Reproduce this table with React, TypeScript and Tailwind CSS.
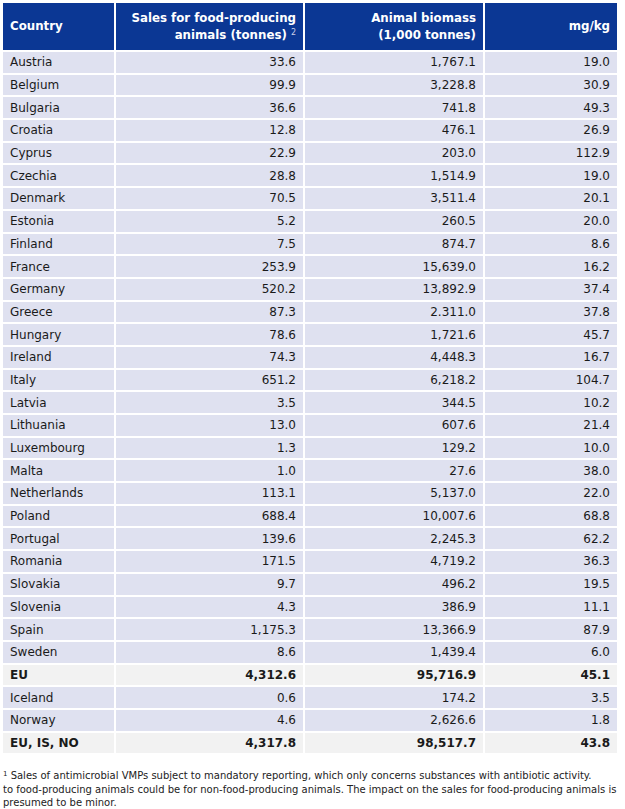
import React from "react";

type Row = { country: string; sales: string; biomass: string; mgkg: string; total?: boolean };

const rows: Row[] = [
  { country: "Austria", sales: "33.6", biomass: "1,767.1", mgkg: "19.0" },
  { country: "Belgium", sales: "99.9", biomass: "3,228.8", mgkg: "30.9" },
  { country: "Bulgaria", sales: "36.6", biomass: "741.8", mgkg: "49.3" },
  { country: "Croatia", sales: "12.8", biomass: "476.1", mgkg: "26.9" },
  { country: "Cyprus", sales: "22.9", biomass: "203.0", mgkg: "112.9" },
  { country: "Czechia", sales: "28.8", biomass: "1,514.9", mgkg: "19.0" },
  { country: "Denmark", sales: "70.5", biomass: "3,511.4", mgkg: "20.1" },
  { country: "Estonia", sales: "5.2", biomass: "260.5", mgkg: "20.0" },
  { country: "Finland", sales: "7.5", biomass: "874.7", mgkg: "8.6" },
  { country: "France", sales: "253.9", biomass: "15,639.0", mgkg: "16.2" },
  { country: "Germany", sales: "520.2", biomass: "13,892.9", mgkg: "37.4" },
  { country: "Greece", sales: "87.3", biomass: "2.311.0", mgkg: "37.8" },
  { country: "Hungary", sales: "78.6", biomass: "1,721.6", mgkg: "45.7" },
  { country: "Ireland", sales: "74.3", biomass: "4,448.3", mgkg: "16.7" },
  { country: "Italy", sales: "651.2", biomass: "6,218.2", mgkg: "104.7" },
  { country: "Latvia", sales: "3.5", biomass: "344.5", mgkg: "10.2" },
  { country: "Lithuania", sales: "13.0", biomass: "607.6", mgkg: "21.4" },
  { country: "Luxembourg", sales: "1.3", biomass: "129.2", mgkg: "10.0" },
  { country: "Malta", sales: "1.0", biomass: "27.6", mgkg: "38.0" },
  { country: "Netherlands", sales: "113.1", biomass: "5,137.0", mgkg: "22.0" },
  { country: "Poland", sales: "688.4", biomass: "10,007.6", mgkg: "68.8" },
  { country: "Portugal", sales: "139.6", biomass: "2,245.3", mgkg: "62.2" },
  { country: "Romania", sales: "171.5", biomass: "4,719.2", mgkg: "36.3" },
  { country: "Slovakia", sales: "9.7", biomass: "496.2", mgkg: "19.5" },
  { country: "Slovenia", sales: "4.3", biomass: "386.9", mgkg: "11.1" },
  { country: "Spain", sales: "1,175.3", biomass: "13,366.9", mgkg: "87.9" },
  { country: "Sweden", sales: "8.6", biomass: "1,439.4", mgkg: "6.0" },
  { country: "EU", sales: "4,312.6", biomass: "95,716.9", mgkg: "45.1", total: true },
  { country: "Iceland", sales: "0.6", biomass: "174.2", mgkg: "3.5" },
  { country: "Norway", sales: "4.6", biomass: "2,626.6", mgkg: "1.8" },
  { country: "EU, IS, NO", sales: "4,317.8", biomass: "98,517.7", mgkg: "43.8", total: true },
];

const App = () => {
  return (
    <div className="w-[625px] h-[809px] bg-white pt-[3px] px-[3px] font-['DejaVu_Sans',Verdana,sans-serif] text-[#1a1a1a]">
      <div className="w-[614px]">
        <div className="grid grid-cols-[113px_189px_180px_132px] bg-[#0b3794] text-white font-bold text-[11.8px] leading-[17px] h-[47px]">
          <div className="flex items-center px-[7px] border-r-2 border-white">Country</div>
          <div className="flex items-center justify-end text-right px-[7px] border-r-2 border-white">
            <span>
              Sales for food-producing
              <br />
              animals (tonnes) <sup className="text-[8px] font-normal text-[#c9cfe8]">2</sup>
            </span>
          </div>
          <div className="flex items-center justify-end text-right px-[7px] border-r-2 border-white">
            <span>
              Animal biomass
              <br />
              (1,000 tonnes)
            </span>
          </div>
          <div className="flex items-center justify-end px-[7px]">mg/kg</div>
        </div>
        {rows.map((r, i) => (
          <div
            key={i}
            className={`grid grid-cols-[113px_189px_180px_132px] h-[22.7px] text-[12px] border-t-2 border-white ${
              r.total ? "bg-[#f2f2f2] font-bold" : "bg-[#dfe1f0]"
            }`}
          >
            <div className="flex items-center px-[7px] border-r-2 border-white">{r.country}</div>
            <div className="flex items-center justify-end px-[7px] border-r-2 border-white">{r.sales}</div>
            <div className="flex items-center justify-end px-[7px] border-r-2 border-white">{r.biomass}</div>
            <div className="flex items-center justify-end px-[7px]">{r.mgkg}</div>
          </div>
        ))}
      </div>
      <div className="mt-[16px] text-[10px] leading-[13.5px] text-[#222] whitespace-nowrap">
        <p>
          <sup className="text-[7px]">1</sup> Sales of antimicrobial VMPs subject to mandatory reporting, which only concerns substances with antibiotic activity.
        </p>
        <p>to food-producing animals could be for non-food-producing animals. The impact on the sales for food-producing animals is</p>
        <p>presumed to be minor.</p>
      </div>
    </div>
  );
};

export default App;
